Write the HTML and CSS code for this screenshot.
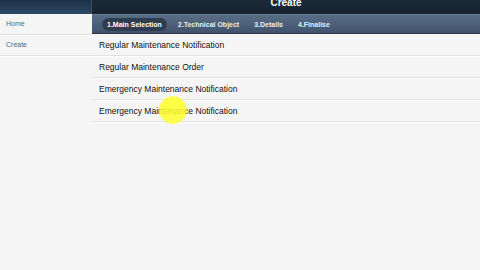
FILE: index.html
```html
<!DOCTYPE html>
<html>
<head>
<meta charset="utf-8">
<link rel="stylesheet" href="styles.css">
</head>
<body>
<div class="app">
  <aside class="side">
    <div class="side-head"></div>
    <div class="side-item">Home</div>
    <div class="side-item">Create</div>
  </aside>
  <main class="main">
    <header class="title-bar"><span class="title">Create</span></header>
    <nav class="tabs">
      <span class="tab active">1.Main Selection</span>
      <span class="tab">2.Technical Object</span>
      <span class="tab">3.Details</span>
      <span class="tab">4.Finalise</span>
    </nav>
    <ul class="list">
      <li class="row">Regular Maintenance Notification</li>
      <li class="row">Regular Maintenance Order</li>
      <li class="row">Emergency Maintenance Notification</li>
      <li class="row">Emergency Maintenance Notification</li>
    </ul>
  </main>
  <div class="cursor"></div>
</div>
</body>
</html>
```

FILE: styles.css
```css
* { box-sizing: border-box; }
html, body { margin: 0; padding: 0; }
body {
  width: 480px;
  height: 270px;
  overflow: hidden;
  background: #f5f5f5;
  font-family: "Liberation Sans", Arial, sans-serif;
}
.app {
  position: relative;
  display: flex;
  height: 270px;
}
.side {
  width: 92px;
  flex: none;
  background: #f5f5f5;
}
.side-head {
  height: 14px;
  background: linear-gradient(#1d2f45, #2c4865);
  border-right: 1px solid #3d4f63;
}
.side-item {
  height: 21px;
  line-height: 20px;
  padding-left: 6px;
  font-size: 7px;
  color: #666;
  border-bottom: 1px solid #e0e0e0;
  box-shadow: 0 1px 0 #fff;
}
.side-item:first-of-type {
  background: #f8f8f6;
  border-right: 1px solid #e4e4e4;
}
.main {
  flex: 1;
  display: flex;
  flex-direction: column;
}
.title-bar {
  height: 14px;
  background: linear-gradient(#1c2a38, #16222f);
  display: flex;
  justify-content: center;
  overflow: hidden;
}
.title {
  color: #fff;
  font-weight: bold;
  font-size: 10px;
  line-height: 10px;
  margin-top: -2px;
}
.tabs {
  height: 20px;
  background: linear-gradient(#5a6d86, #41536c);
  border-top: 1px solid #6c7d94;
  border-bottom: 1px solid #2c3848;
  display: flex;
  align-items: center;
  padding-left: 10px;
  gap: 7px;
}
.tab {
  color: #e8edf3;
  font-weight: bold;
  font-size: 7px;
  padding: 3px 4px;
  border-radius: 7px;
}
.tab.active {
  background: #2e3c50;
  color: #fff;
  padding: 3px 5px;
}
.list {
  list-style: none;
  margin: 0;
  padding: 0;
}
.row {
  height: 22px;
  line-height: 22px;
  padding-left: 7px;
  font-size: 8.5px;
  color: #111;
  border-bottom: 1px solid #e3e3e3;
  box-shadow: 0 1px 0 #fff;
}
.cursor {
  position: absolute;
  left: 159px;
  top: 96px;
  width: 28px;
  height: 28px;
  border-radius: 50%;
  background: radial-gradient(circle, rgba(255,255,40,0.85) 55%, rgba(255,255,60,0.4) 100%);
}
```
